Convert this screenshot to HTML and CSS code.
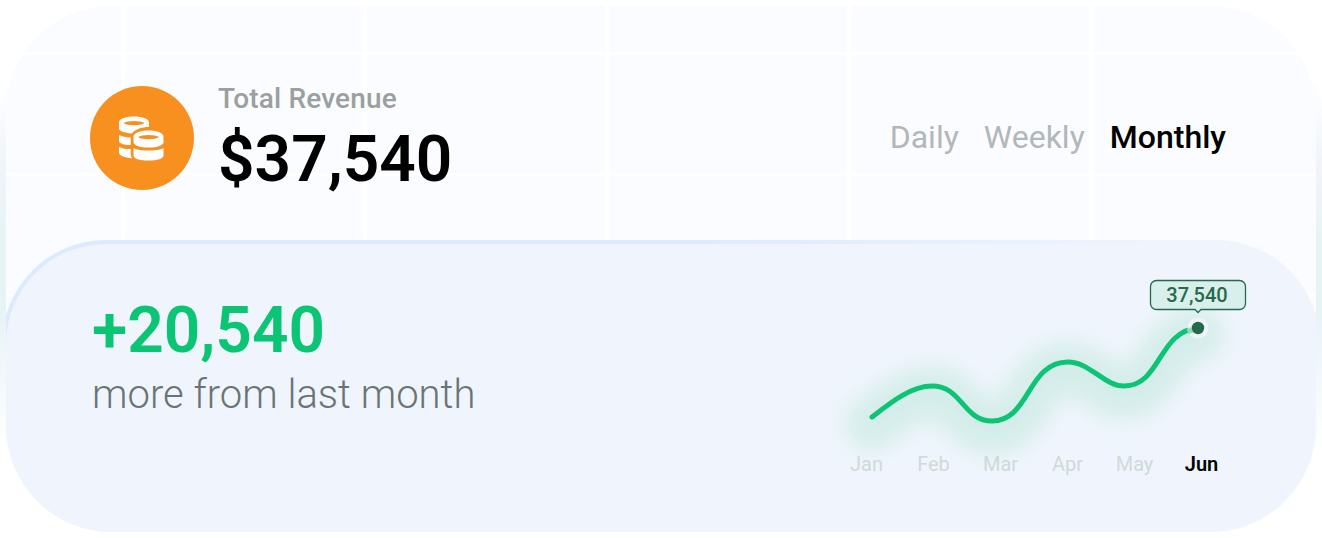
FILE: index.html
```html
<!DOCTYPE html>
<html lang="en">
<head>
    <meta charset="UTF-8">
    <meta name="viewport" content="width=device-width, initial-scale=1.0">
    <title>Total Revenue</title>
    <link rel="stylesheet" href="styles.css">
</head>
<body>
    <div class="frame">
        <div class="card">
            <header class="header">
                <div class="icon">
                    <svg width="45" height="45" viewBox="0 0 45 45">
                        <!-- back stack -->
                        <g fill="#fff">
                            <path d="M0 6.500C0 3 6 0.500 15 0.500s15 2.500 15 6v4.500c-8 0-14 2.500-17 6.500C5 17 0 15 0 12.500z"/>
                            <path d="M0 19c3 1.500 7 2.300 11.700 2.500V29C5 29 0 27.500 0 25z"/>
                            <path d="M0 31c3 1.500 7 2.300 11.700 2v3c0 2.500.3 4 1.300 6.200C5 41.500 0 39.500 0 36.500z"/>
                        </g>
                        <path d="M4.500 7C8 4.300 22 4.300 25.500 7C22 10 8 10 4.500 7z" fill="#f89020"/>
                        <!-- front stack -->
                        <g fill="#fff">
                            <path d="M14.500 21c0-4 6-6.500 15-6.500s15 2.500 15 6.500v5c0 3.500-6 5.500-15 5.500s-15-2-15-5.500z"/>
                            <path d="M14.500 32c3 2 9 2.500 15 2.500s12-.5 15-2.500v7.500c0 3-6 5-15 5s-15-2-15-5z"/>
                        </g>
                        <path d="M19 21C22.500 18.300 36.500 18.300 40 21C36.500 24 22.500 24 19 21z" fill="#f89020"/>
                    </svg>
                </div>
                <div class="total">
                    <p class="label">Total Revenue</p>
                    <p class="amount">$37,540</p>
                </div>
                <nav class="tabs">
                    <span>Daily</span>
                    <span>Weekly</span>
                    <span class="active">Monthly</span>
                </nav>
            </header>

            <section class="panel">
                <div class="growth">
                    <p class="growth-amount">+20,540</p>
                    <p class="growth-text">more from last month</p>
                </div>
                <div class="chart">
                    <svg class="plot" width="402" height="180" viewBox="0 0 402 180">
                        <defs>
                            <filter id="blur" x="-30%" y="-80%" width="160%" height="260%">
                                <feGaussianBlur stdDeviation="11"/>
                            </filter>
                            <path id="line" d="M39 143C57 129 78 112 99 112C129 112 130 147 159 147C197 147 194 88 235 88C257 88 271 112 291 112C328 112 325 57 365 54"/>
                        </defs>
                        <use class="glow" href="#line" y="7" filter="url(#blur)"/>
                        <use class="line" href="#line"/>
                        <circle cx="365" cy="54" r="10.500" fill="#f0f5fb" fill-opacity="0.9"/>
                        <path class="line-end" d="M354.500 57.500L361 55.500"/>
                        <circle cx="365" cy="54" r="6.200" fill="#276a4b"/>
                        <path class="tip" d="M323.500 6.500h83a6 6 0 0 1 6 6v17a6 6 0 0 1-6 6h-38.500l-3 3-3-3h-38.500a6 6 0 0 1-6-6v-17a6 6 0 0 1 6-6z"/>
                        <text class="tip-text" x="364" y="28" text-anchor="middle">37,540</text>
                    </svg>
                    <div class="months">
                        <span>Jan</span>
                        <span>Feb</span>
                        <span>Mar</span>
                        <span>Apr</span>
                        <span>May</span>
                        <span class="active">Jun</span>
                    </div>
                </div>
            </section>
        </div>
    </div>
</body>
</html>
```

FILE: styles.css
```css
* {
    box-sizing: border-box;
}
body {
    font-family: Roboto, Arial, sans-serif;
    margin: 0;
    background-color: #fff;
}
p {
    margin: 0;
    white-space: nowrap;
}
.frame {
    width: 1322px;
    height: 538px;
    padding: 6px;
    border-radius: 112px;
    background: linear-gradient(#fff 15%, #f0f5fa 30%, #e8f3f6 45%, #e8f3f6 58%, #fff 84%);
}
.card {
    height: 526px;
    border-radius: 106px;
    overflow: hidden;
    background-color: #fbfcff;
    background-image:
        linear-gradient(90deg, #fff 4px, transparent 4px),
        linear-gradient(#fff 3px, transparent 3px);
    background-size: 242px 100%, 100% 121px;
    background-position: 115px 0, 0 46px;
}
.header {
    display: flex;
    height: 234px;
    padding: 80px 90px 0 83.5px;
}
.icon {
    display: flex;
    align-items: center;
    justify-content: center;
    width: 104px;
    height: 104px;
    border-radius: 50%;
    background: #f89020;
}
.total {
    margin-left: 24.5px;
}
.label {
    font-size: 28px;
    font-weight: 500;
    line-height: 26px;
    letter-spacing: 0.15px;
    color: #9a9fa0;
}
.amount {
    margin-top: 10px;
    font-size: 64px;
    font-weight: 600;
    line-height: 76px;
    color: #000;
}
.tabs {
    display: flex;
    align-items: center;
    gap: 25px;
    height: 102px;
    margin-left: auto;
    font-size: 32px;
    color: #b2b7b9;
}
.tabs .active {
    font-weight: 500;
    color: #000;
}
.panel {
    display: flex;
    justify-content: space-between;
    height: 310px;
    margin: 0 -4px;
    border: 4px solid transparent;
    border-radius: 104px;
    background:
        linear-gradient(#f0f5fd, #f0f5fd) padding-box,
        linear-gradient(90deg, #dbeaff 50%, #f0f5fd 90%) border-box;
}
.growth {
    padding: 49px 0 0 86px;
}
.growth-amount {
    font-size: 64px;
    font-weight: 600;
    line-height: 76px;
    color: #0bc575;
}
.growth-text {
    margin-top: 2px;
    font-size: 40px;
    font-weight: 300;
    line-height: 48px;
    color: #6a7474;
}
.chart {
    width: 402px;
    margin-right: 81px;
    padding-top: 30px;
}
.plot {
    display: block;
    overflow: visible;
}
.glow {
    fill: none;
    stroke: #d3ede8;
    stroke-width: 54;
    stroke-linecap: round;
    opacity: 0.9;
}
.line {
    fill: none;
    stroke: #0bc575;
    stroke-width: 5;
    stroke-linecap: round;
}
.line-end {
    stroke: #85dcb7;
    stroke-width: 5;
}
.tip {
    fill: #d9efec;
    stroke: #276a4b;
    stroke-width: 1.3;
}
.tip-text {
    font-size: 20px;
    font-weight: 500;
    fill: #276a4b;
}
.months {
    display: grid;
    grid-template-columns: repeat(6, 67px);
    font-size: 20px;
    line-height: 20px;
    text-align: center;
    color: #cfdad9;
}
.months .active {
    font-weight: 600;
    color: #000;
}
```
